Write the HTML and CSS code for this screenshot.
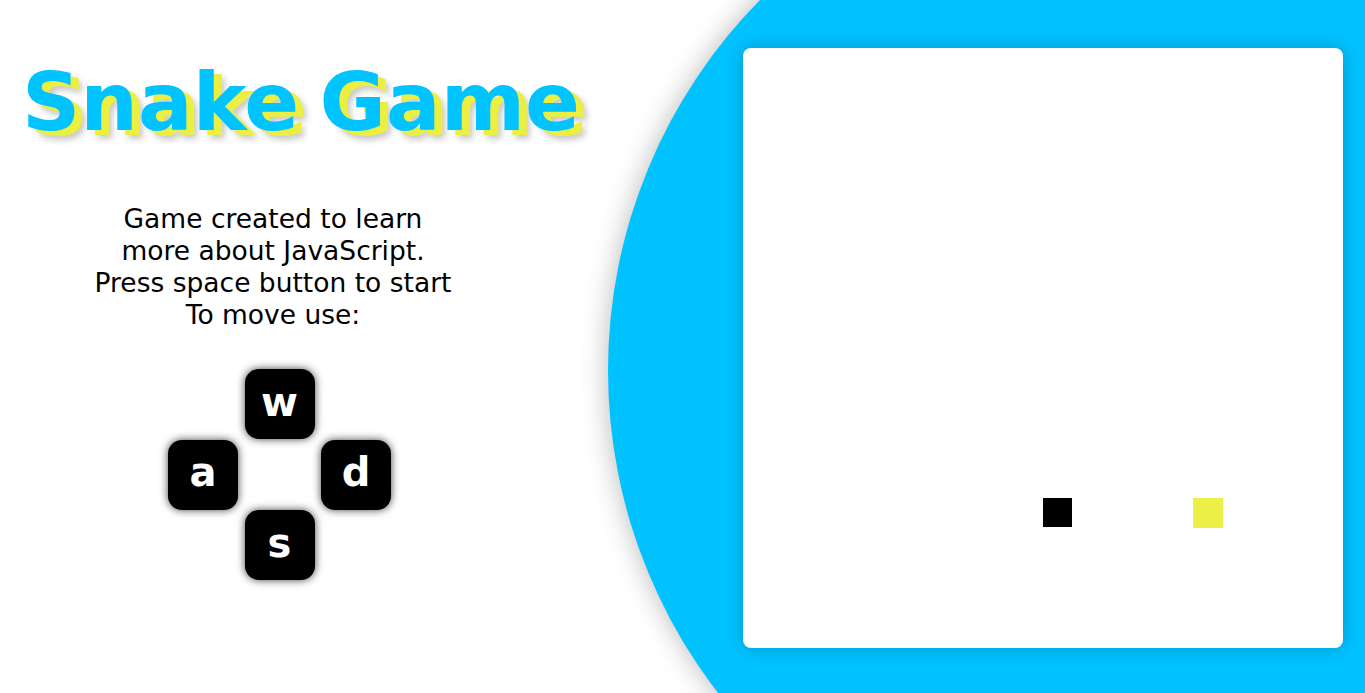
FILE: index.html
```html
<!DOCTYPE html>
<html lang="en">
<head>
<meta charset="utf-8">
<title>Snake Game</title>
<link rel="stylesheet" href="styles.css">
</head>
<body>
  <main class="page">
    <div class="blob"></div>
    <section class="info">
      <h1 class="title">Snake Game</h1>
      <p class="desc">Game created to learn<br>more about JavaScript.<br>Press space button to start<br>To move use:</p>
      <div class="keys">
        <div class="key key-w">w</div>
        <div class="key key-a">a</div>
        <div class="key key-d">d</div>
        <div class="key key-s">s</div>
      </div>
    </section>
    <section class="board-wrap">
      <div class="board">
        <svg class="board-svg" width="600" height="600" viewBox="0 0 600 600">
          <rect x="300" y="450" width="29" height="29" fill="#000"/>
          <rect x="450" y="450" width="30" height="30" fill="#ecef45"/>
        </svg>
      </div>
    </section>
  </main>
</body>
</html>
```
FILE: styles.css
```css
html, body {
  margin: 0;
  padding: 0;
  background: #fff;
  font-family: "DejaVu Sans", sans-serif;
}

.page {
  position: relative;
  overflow: hidden;
  display: flex;
  width: 1365px;
  height: 693px;
}

.blob {
  position: absolute;
  left: 608px;
  top: -157px;
  width: 1055px;
  height: 1055px;
  border-radius: 50%;
  background: #00c2ff;
  box-shadow: 0 0 28px rgba(0, 0, 0, 0.28);
}

.info {
  position: relative;
  flex: 1;
  display: flex;
  flex-direction: column;
}

.title {
  margin: 55px 0 0 22px;
  font-size: 81px;
  font-weight: bold;
  line-height: 94px;
  word-spacing: -8px;
  color: #00c3ff;
  white-space: nowrap;
  text-shadow: 8px 5px 0 #ebef42, 11px 9px 6px rgba(0, 0, 0, 0.22);
}

.desc {
  width: 546px;
  margin: 54px 0 0 0;
  text-align: center;
  font-size: 26.5px;
  line-height: 32px;
  color: #000;
}

.keys {
  margin: 38px 0 0 168px;
  display: grid;
  grid-template-columns: 70px 70px 70px;
  grid-template-rows: 70px 70px 70px;
  column-gap: 6.5px;
  row-gap: 0.5px;
}

.key {
  background: #000;
  color: #fff;
  border-radius: 14px;
  box-shadow: 0 0 8px rgba(0, 0, 0, 0.75);
  display: flex;
  align-items: center;
  justify-content: center;
  font-size: 40px;
  font-weight: bold;
  line-height: 1;
  padding-bottom: 5px;
  box-sizing: border-box;
}

.key-w { grid-column: 2; grid-row: 1; }
.key-a { grid-column: 1; grid-row: 2; }
.key-d { grid-column: 3; grid-row: 2; }
.key-s { grid-column: 2; grid-row: 3; }

.board-wrap {
  position: relative;
  display: flex;
  align-items: flex-start;
  padding: 48px 22px 0 0;
}

.board {
  width: 600px;
  height: 600px;
  background: #fff;
  border-radius: 8px;
  box-shadow: 0 0 18px rgba(0, 0, 0, 0.22);
  overflow: hidden;
}

.board-svg {
  display: block;
}
```
